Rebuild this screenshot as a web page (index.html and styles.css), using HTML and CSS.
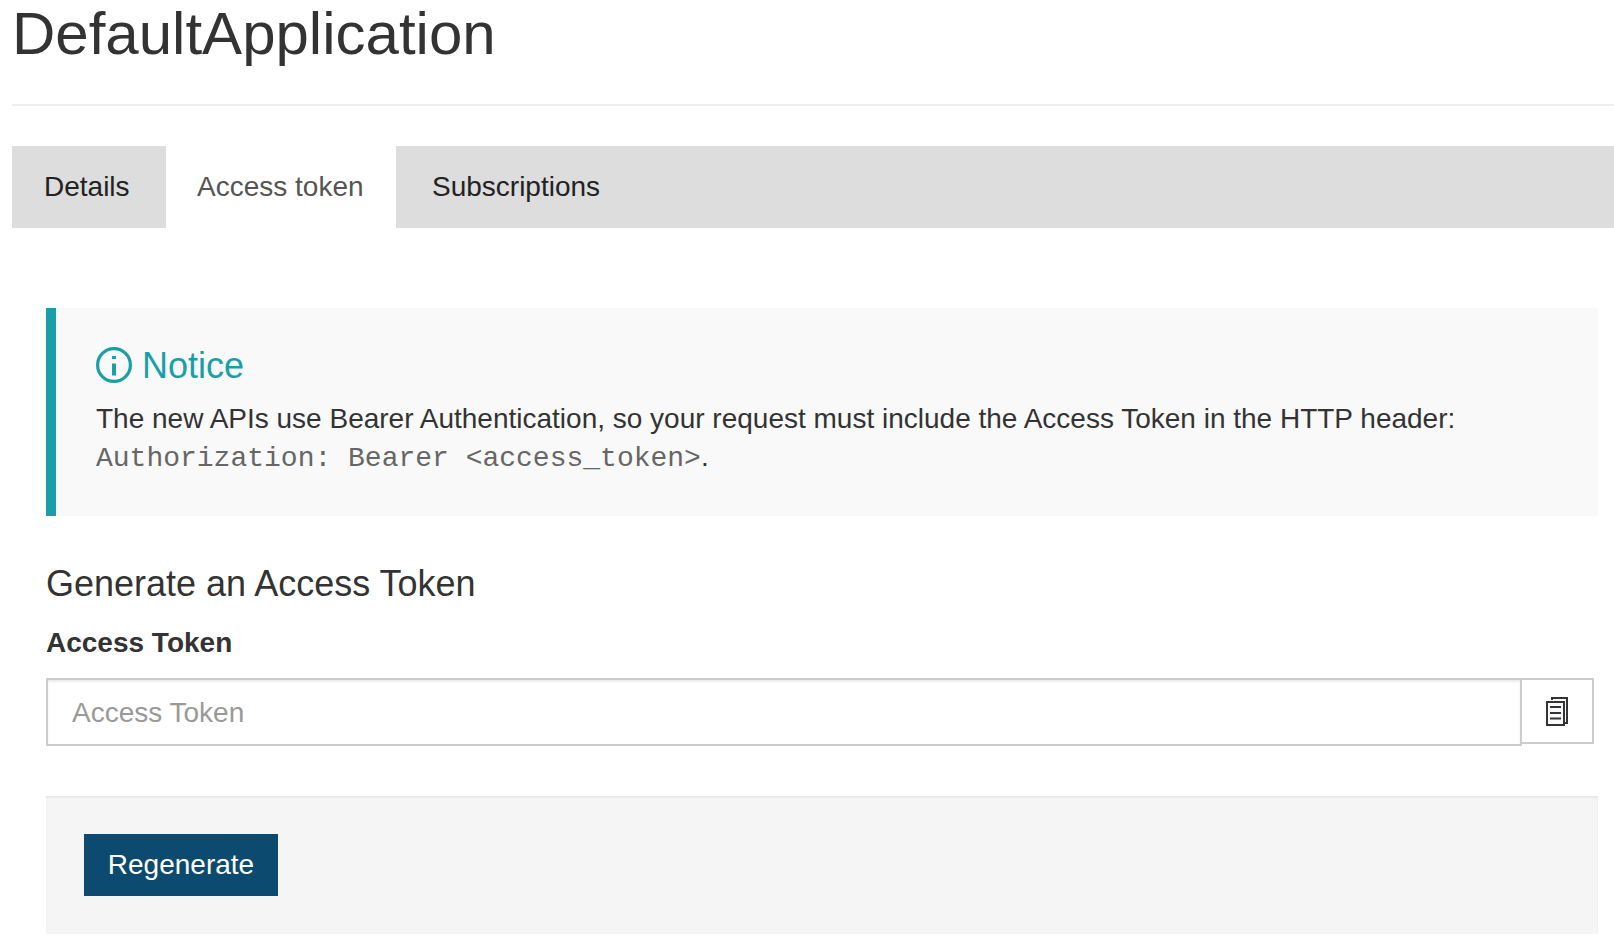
FILE: index.html
```html
<!DOCTYPE html>
<html lang="en">
<head>
<meta charset="utf-8">
<title>DefaultApplication</title>
<link rel="stylesheet" href="styles.css">
</head>
<body>
<header class="page-header"><h1 class="page-title">DefaultApplication</h1></header>
<nav class="tabs">
  <a class="tab">Details</a>
  <a class="tab tab-active">Access token</a>
  <a class="tab tab-last">Subscriptions</a>
</nav>
<main class="content">
  <section class="notice">
    <h2 class="notice-title">
      <svg class="notice-icon" viewBox="0 0 36 36" aria-hidden="true"><circle cx="18" cy="18" r="16.4" fill="none" stroke="currentColor" stroke-width="3.2"/><path d="M16 9h4v3h-4zM16 16.5h4v12h-4z" fill="currentColor"/></svg>
      <span>Notice</span>
    </h2>
    <p class="notice-text">The new APIs use Bearer Authentication, so your request must include the Access Token in the HTTP header: <br><code class="code">Authorization: Bearer &lt;access_token&gt;</code>.</p>
  </section>
  <h2 class="section-title">Generate an Access Token</h2>
  <label class="label" for="token">Access Token</label>
  <div class="token-group">
    <input class="token-input" id="token" type="text" placeholder="Access Token">
    <button class="copy-button" type="button" aria-label="Copy">
      <svg class="copy-icon" viewBox="0 0 22 29" aria-hidden="true"><path d="M6 3V1h15v25h-2" fill="none" stroke="#333" stroke-width="2"/><rect x="1" y="5" width="17" height="23" fill="#f8fafc" stroke="#333" stroke-width="2"/><path d="M4 10h11M4 16h11M4 21.5h11" stroke="#333" stroke-width="2"/></svg>
    </button>
  </div>
  <footer class="actions"><button class="regenerate" type="button">Regenerate</button></footer>
</main>
</body>
</html>
```
FILE: styles.css
```css
* { box-sizing: border-box; }
body {
  margin: 0;
  padding-left: 12px;
  background: #fff;
  color: #333;
  font: 28px/39px "Liberation Sans", Arial, sans-serif;
}
h1, h2, p { margin: 0; font-weight: 400; }
.page-header { padding-bottom: 36px; border-bottom: 2px solid #eee; }
.page-title { font-size: 60px; line-height: 68px; }
.tabs { display: flex; height: 82px; margin-top: 40px; background: #ddd; }
.tab { padding: 0 36px 0 32px; line-height: 81px; color: #222; width: 154px; white-space: nowrap; }
.tab-active { width: 230px; padding-left: 31px; background: #fff; color: #555; }
.tab-last { width: auto; padding-left: 36px; }
.content { padding: 80px 16px 0 34px; }
.notice {
  height: 208px;
  padding: 38px 40px;
  border-left: 10px solid #1a9fa8;
  background: #f9f9f9;
}
.notice-title { display: flex; gap: 10px; font-size: 36px; line-height: 40px; color: #1a9fa8; }
.notice-icon { width: 36px; height: 36px; margin-top: .5px; }
.notice-text { margin-top: 14px; line-height: 38px; }
.code { font: 28px/36px "Liberation Mono", "Courier New", monospace; color: #666; }
.section-title { margin-top: 48px; font-size: 36px; line-height: 40px; }
.label { display: block; margin-top: 19px; font-weight: 700; }
.token-group { display: flex; align-items: flex-start; margin-top: 16px; padding-right: 4px; }
.token-input {
  width: 1476px;
  height: 68px;
  padding: 1px 24px 0;
  border: 2px solid #ccc;
  border-radius: 0;
  outline: 0;
  background: #fff;
  box-shadow: inset 0 2px 2px rgba(0, 0, 0, .075);
  font: inherit;
}
.token-input::placeholder { color: #999; opacity: 1; }
.copy-button {
  display: flex;
  align-items: center;
  justify-content: center;
  width: 72px;
  height: 66px;
  padding: 0;
  border: 2px solid #ccc;
  border-left: 0;
  background: #fff;
}
.copy-icon { width: 22px; height: 29px; }
.actions {
  height: 138px;
  margin-top: 50px;
  padding: 38px;
  background: #f5f5f5;
  box-shadow: inset 0 2px 2px rgba(0, 0, 0, .05);
}
.regenerate {
  display: block;
  width: 194px;
  height: 62px;
  padding: 0 0 1px;
  border: 0;
  background: #0d4a70;
  color: #fff;
  font: inherit;
}
```
